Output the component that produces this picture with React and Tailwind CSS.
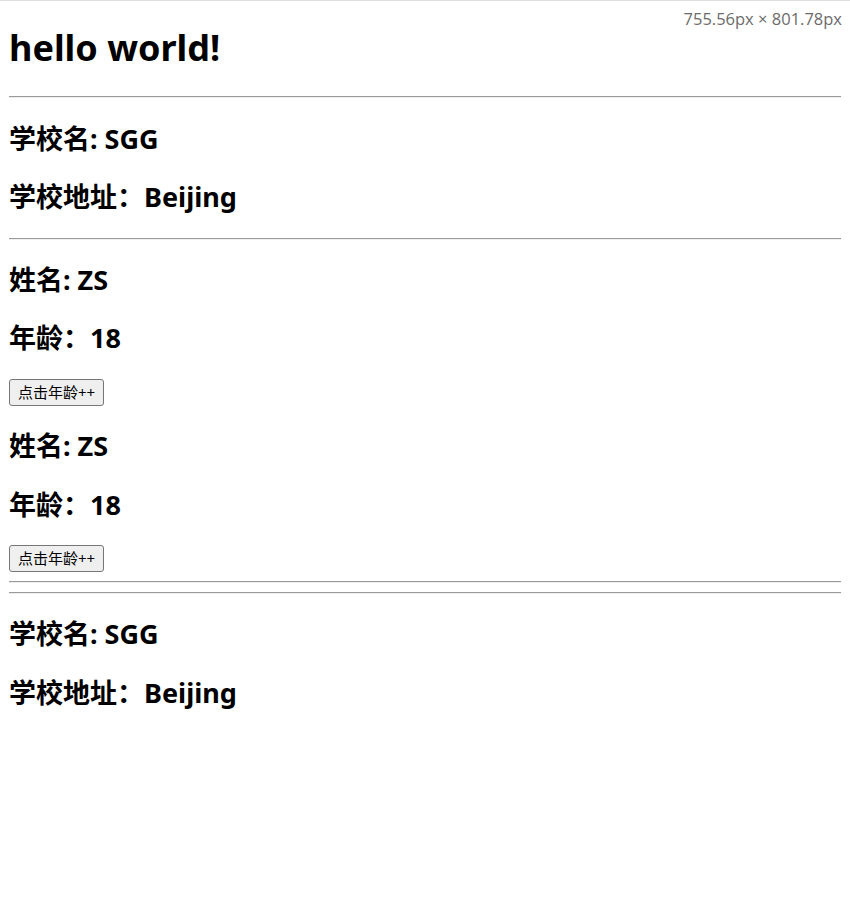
import { useState } from "react";

function School() {
  return (
    <div>
      <h2 className="my-[22.4px] text-[27px] font-bold leading-[36px]">学校名: SGG</h2>
      <h2 className="my-[22.4px] text-[27px] font-bold leading-[36px]">学校地址：Beijing</h2>
    </div>
  );
}

function Student() {
  const [age, setAge] = useState(18);
  return (
    <div>
      <h2 className="my-[22.4px] text-[27px] font-bold leading-[36px]">姓名: ZS</h2>
      <h2 className="my-[22.4px] text-[27px] font-bold leading-[36px]">年龄：{age}</h2>
      <button
        onClick={() => setAge(age + 1)}
        className="block h-[27px] px-[8px] text-[15px] leading-none bg-[#efefef] border border-[#767676] rounded-[3px] hover:bg-[#e5e5e5]"
      >
        点击年龄++
      </button>
    </div>
  );
}

function Hr() {
  return <hr className="my-[9px] h-0 border-t border-b border-t-[#9a9a9a] border-b-[#eeeeee]" />;
}

export default function App() {
  return (
    <div className="relative min-h-[901px] bg-white border-t border-[#dddddd] px-[9px] pb-[9px] text-black font-['Noto_Sans','Noto_Sans_CJK_SC',sans-serif]">
      <div className="absolute top-[8px] right-[8px] text-[16.5px] leading-[20px] text-[#6b6b6b] font-['Open_Sans','Noto_Sans',sans-serif]">
        755.56px × 801.78px
      </div>
      <h1 className="mt-[23.4px] mb-[24px] text-[36px] font-bold leading-[48px]">hello world!</h1>
      <Hr />
      <School />
      <Hr />
      <Student />
      <Student />
      <Hr />
      <Hr />
      <School />
    </div>
  );
}
